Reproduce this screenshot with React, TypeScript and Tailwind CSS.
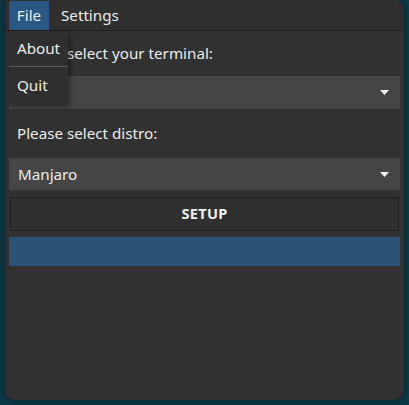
import React from 'react';

const Caret = () => (
  <svg width="9" height="5" viewBox="0 0 9 5" className="mr-[11px]">
    <path d="M0 0H9L4.5 5Z" fill="#f2f2f2" />
  </svg>
);

const Select = ({ value, className }: { value?: string; className: string }) => (
  <div className={`flex items-center justify-between bg-[#454545] pl-[9px] ${className}`}>
    <span className="text-[#ececec]">{value}</span>
    <Caret />
  </div>
);

export default function App() {
  return (
    <div
      className="h-[405px] w-[409px] bg-[#0d3845] pl-[5px] text-[15.2px]"
      style={{ fontFamily: '"Noto Sans", "Open Sans", sans-serif' }}
    >
      <div className="relative h-[400px] w-[399px] overflow-hidden rounded-tr-[10px] rounded-b-[10px] bg-[#313131] shadow-[0_0_6px_rgba(0,0,0,0.45)]">
        {/* menu bar */}
        <div className="flex h-[31px] items-stretch border-b border-[#1f1f1f] bg-[#2f2f2f] pl-[4px] pt-[1px] text-[#ececec]">
          <div className="flex w-[40px] items-center justify-center rounded-tl-[3px] bg-[#2a5784]">File</div>
          <div className="flex items-center px-[12px]">Settings</div>
        </div>

        <div className="flex flex-col px-[4px] text-[#ececec]">
          <div className="flex h-[45px] items-center pl-[8px]">Please select your terminal:</div>
          <Select className="h-[33px]" />
          <div className="flex h-[49px] items-center pl-[8px]">Please select distro:</div>
          <Select value="Manjaro" className="h-[32px]" />
          <button className="mx-[1px] mt-[7px] h-[34px] border border-[#1e1e1e] bg-[#2f2f2f] text-[14.6px] font-bold tracking-[0.02em] text-[#f0f0f0]">
            SETUP
          </button>
          <div className="mt-[6px] h-[29px] bg-[#2b5274]" />
        </div>

        {/* File dropdown */}
        <div className="absolute left-[4px] top-[31px] flex w-[59px] flex-col bg-[#2f2f2f] text-[#ececec] shadow-[2px_3px_5px_rgba(0,0,0,0.4)]">
          <div className="flex h-[35px] items-center pl-[8px]">About</div>
          <div className="h-px bg-[#5a5a5a]" />
          <div className="flex h-[37px] items-center pl-[8px]">Quit</div>
        </div>
      </div>
    </div>
  );
}
